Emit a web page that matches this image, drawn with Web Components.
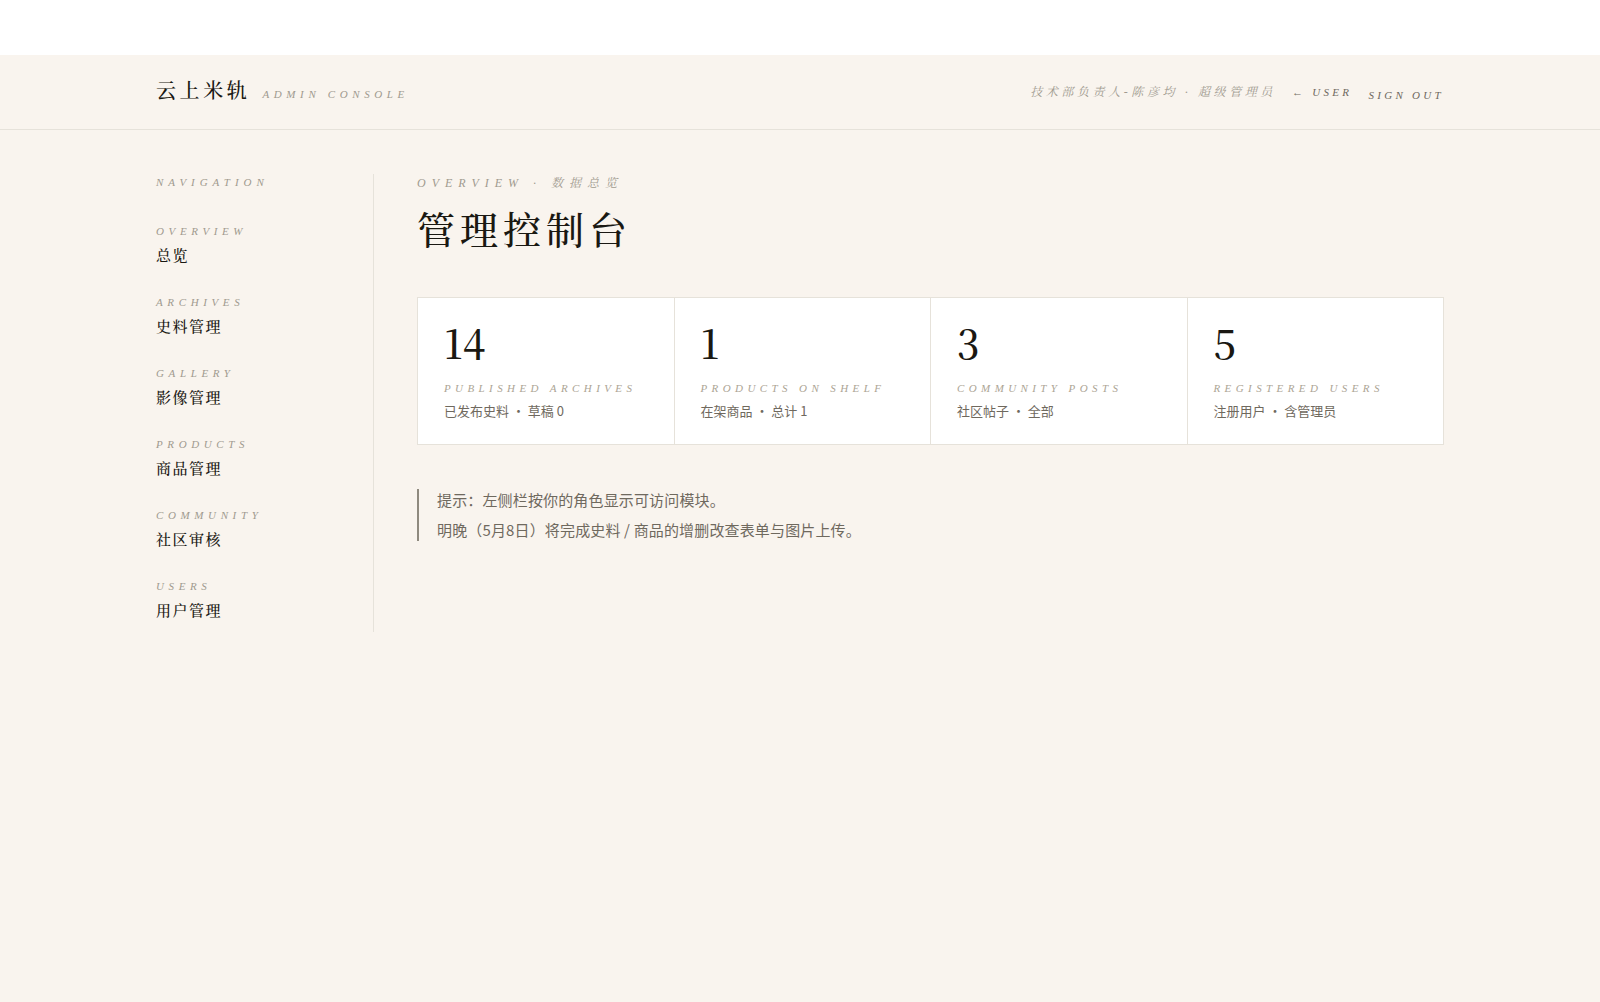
<!DOCTYPE html>
<html lang="zh-CN">
<head>
<meta charset="utf-8">
<title>云上米轨 · Admin Console</title>
<style>
html {
  --paper: #f9f4ee;
  --ink: #1a1812;
  --soft: #6f695e;
  --mute: #a09a8f;
  --line: #e6e2da;
  --serif: "Liberation Serif", "Noto Serif CJK SC", "Noto Sans CJK SC", serif;
  --sans: "Noto Sans CJK SC", "Noto Sans", sans-serif;
  background: #fff;
}
body {
  margin: 55px 0 0;
  color: var(--ink);
  font-family: var(--serif);
}
</style>
</head>
<body>

<admin-shell>
  <admin-header slot="header" brand="云上米轨" tagline="ADMIN CONSOLE" user="技术部负责人-陈彦均 · 超级管理员"></admin-header>
  <side-nav slot="nav" label="NAVIGATION">
    <nav-item href="#overview" en="OVERVIEW">总览</nav-item>
    <nav-item href="#archives" en="ARCHIVES">史料管理</nav-item>
    <nav-item href="#gallery" en="GALLERY">影像管理</nav-item>
    <nav-item href="#products" en="PRODUCTS">商品管理</nav-item>
    <nav-item href="#community" en="COMMUNITY">社区审核</nav-item>
    <nav-item href="#users" en="USERS">用户管理</nav-item>
  </side-nav>
  <page-title eyebrow="OVERVIEW · 数据总览">管理控制台</page-title>
  <stat-grid>
    <stat-card value="14" label="PUBLISHED ARCHIVES">已发布史料 ・ 草稿 0</stat-card>
    <stat-card value="1" label="PRODUCTS ON SHELF">在架商品 ・ 总计 1</stat-card>
    <stat-card value="3" label="COMMUNITY POSTS">社区帖子 ・ 全部</stat-card>
    <stat-card value="5" label="REGISTERED USERS">注册用户 ・ 含管理员</stat-card>
  </stat-grid>
  <tip-note>提示：左侧栏按你的角色显示可访问模块。<br>明晚（5月8日）将完成史料 / 商品的增删改查表单与图片上传。</tip-note>
</admin-shell>

<script>
// small base: render template() into an open shadow root
class BaseElement extends HTMLElement {
  constructor() {
    super();
    this.attachShadow({mode: 'open'});
  }
  connectedCallback() {
    this.shadowRoot.innerHTML = this.template();
  }
  attr(name) {
    return this.getAttribute(name) || '';
  }
}

customElements.define('admin-shell',
  class extends BaseElement {
    template() {
      return `
<style>
:host {
  display: block;
  min-height: calc(100vh - 55px);
  background: var(--paper);
}
.body {
  display: flex;
  gap: 43px;
  align-items: flex-start;
  box-sizing: border-box;
  max-width: 1320px;
  margin: 0 auto;
  padding: 44px 16px;
}
main {
  flex: 1;
  min-width: 0;
}
</style>
<slot name="header"></slot>
<div class="body">
  <slot name="nav"></slot>
  <main><slot></slot></main>
</div>`;
    }
  }
);

customElements.define('admin-header',
  class extends BaseElement {
    template() {
      return `
<style>
:host {
  display: block;
  border-bottom: 1px solid var(--line);
}
header {
  display: flex;
  justify-content: space-between;
  align-items: center;
  box-sizing: border-box;
  max-width: 1320px;
  min-height: 74px;
  margin: 0 auto;
  padding: 0 16px;
}
.brand {
  display: flex;
  align-items: baseline;
  gap: 12px;
  padding-bottom: 2px;
  color: var(--ink);
  text-decoration: none;
}
.name {
  font-size: 20px;
  line-height: 30px;
  font-weight: 500;
  letter-spacing: 0.18em;
}
.tagline, .user, .tools a, button {
  font-size: 11px;
  line-height: 20px;
  font-style: italic;
}
.tagline {
  color: var(--mute);
  letter-spacing: 0.42em;
}
.tools {
  display: flex;
  align-items: center;
  gap: 16px;
}
.user {
  color: var(--mute);
  font-size: 12px;
  letter-spacing: 0.3em;
}
.tools a, button {
  color: var(--soft);
  letter-spacing: 0.3em;
  text-decoration: none;
}
form {
  margin: 0;
  padding-top: 6px;
}
button {
  display: block;
  margin: 0;
  padding: 0;
  border: 0;
  background: none;
  font-family: inherit;
  cursor: pointer;
}
</style>
<header>
  <a class="brand" href="#home">
    <span class="name">${this.attr('brand')}</span>
    <span class="tagline">${this.attr('tagline')}</span>
  </a>
  <div class="tools">
    <span class="user">${this.attr('user')}</span>
    <a href="#user">← USER</a>
    <form><button type="button">SIGN OUT</button></form>
  </div>
</header>`;
    }
  }
);

customElements.define('side-nav',
  class extends BaseElement {
    template() {
      return `
<style>
:host {
  display: block;
  flex: none;
  box-sizing: border-box;
  width: 218px;
  border-right: 1px solid var(--line);
}
.label {
  margin: 0 0 16px;
  color: var(--mute);
  font-size: 11px;
  line-height: 16px;
  font-weight: 400;
  font-style: italic;
  letter-spacing: 0.45em;
}
</style>
<nav>
  <h2 class="label">${this.attr('label')}</h2>
  <slot></slot>
</nav>`;
    }
  }
);

customElements.define('nav-item',
  class extends BaseElement {
    template() {
      return `
<style>
:host {
  display: block;
}
a {
  display: grid;
  gap: 3px;
  padding: 15px 0 9px;
  color: var(--ink);
  text-decoration: none;
}
.en {
  color: var(--mute);
  font-size: 11px;
  line-height: 20px;
  font-style: italic;
  letter-spacing: 0.42em;
}
.cn {
  font-size: 15px;
  line-height: 24px;
  font-weight: 500;
  letter-spacing: 0.1em;
}
</style>
<a href="${this.attr('href')}">
  <span class="en">${this.attr('en')}</span>
  <span class="cn"><slot></slot></span>
</a>`;
    }
  }
);

customElements.define('page-title',
  class extends BaseElement {
    template() {
      return `
<style>
:host {
  display: block;
  margin-bottom: 37px;
}
.eyebrow {
  margin: 0;
  color: var(--mute);
  font-size: 12px;
  line-height: 18px;
  font-style: italic;
  letter-spacing: 0.5em;
}
h1 {
  margin: 10px 0 0;
  font-size: 38px;
  line-height: 58px;
  font-weight: 500;
  letter-spacing: 5px;
}
</style>
<p class="eyebrow">${this.attr('eyebrow')}</p>
<h1><slot></slot></h1>`;
    }
  }
);

customElements.define('stat-grid',
  class extends BaseElement {
    template() {
      return `
<style>
:host {
  display: grid;
  grid-template-columns: repeat(4, 1fr);
  gap: 1px;
  margin-bottom: 40px;
  border: 1px solid var(--line);
  background: var(--line);
}
</style>
<slot></slot>`;
    }
  }
);

customElements.define('stat-card',
  class extends BaseElement {
    template() {
      return `
<style>
:host {
  display: block;
  padding: 23px 26px;
  background: #fff;
}
.value, .label, .note {
  margin: 0;
}
.value {
  font-family: "Noto Serif CJK SC", "Liberation Serif", serif;
  font-size: 40px;
  font-weight: 500;
  line-height: 42px;
}
.label {
  margin: 15px 0 3px;
  color: #aca494;
  font-size: 11px;
  line-height: 20px;
  font-style: italic;
  letter-spacing: 0.4em;
  white-space: nowrap;
}
.note {
  color: var(--soft);
  font-family: var(--sans);
  font-size: 13px;
  line-height: 20px;
}
</style>
<p class="value">${this.attr('value')}</p>
<p class="label">${this.attr('label')}</p>
<p class="note"><slot></slot></p>`;
    }
  }
);

customElements.define('tip-note',
  class extends BaseElement {
    template() {
      return `
<style>
:host {
  display: flex;
  gap: 18px;
  color: var(--soft);
  font-family: var(--sans);
  font-size: 15px;
  line-height: 30px;
  letter-spacing: 0.01em;
}
.bar {
  flex: none;
  width: 2px;
  margin: 4px 0;
  background: #8f8a7f;
}
p {
  margin: 0;
}
</style>
<span class="bar"></span>
<p><slot></slot></p>`;
    }
  }
);
</script>
</body>
</html>
